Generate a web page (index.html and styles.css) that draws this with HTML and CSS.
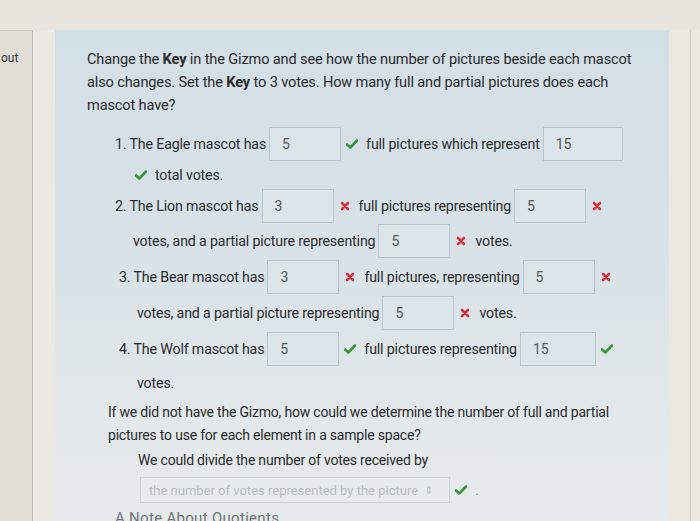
FILE: index.html
```html
<!DOCTYPE html>
<html lang="en">
<head>
    <meta charset="UTF-8">
    <title>Gizmo Questions</title>
    <link rel="stylesheet" href="styles.css">
</head>
<body>
    <div class="top-strip"></div>
    <div class="layout">
        <div class="sidebar">
            <div class="sidebar-link">out</div>
        </div>
        <div class="gutter"></div>

        <div class="panel">
            <p class="question">
                Change the <b>Key</b> in the Gizmo and see how the number of pictures beside each mascot
                also changes. Set the <b>Key</b> to 3 votes. How many full and partial pictures does each
                mascot have?
            </p>

            <div class="answers">
                <!-- Eagle -->
                <div class="line row-a">
                    <span class="label">1. The Eagle mascot has</span>
                    <input class="box" type="text" value="5" readonly>
                    <span class="mark ok"><svg viewBox="0 0 12 10"><path d="M1 5.5 L4.3 8.5 L11 1.5" /></svg></span>
                    <span class="label">full pictures which represent</span>
                    <input class="box wide" type="text" value="15" readonly>
                </div>
                <div class="line row-b indent">
                    <span class="mark ok"><svg viewBox="0 0 12 10"><path d="M1 5.5 L4.3 8.5 L11 1.5" /></svg></span>
                    <span class="label">total votes.</span>
                </div>

                <!-- Lion -->
                <div class="line row-c">
                    <span class="label">2. The Lion mascot has</span>
                    <input class="box" type="text" value="3" readonly>
                    <span class="mark bad"><svg viewBox="0 0 10 10"><path d="M2 2 L8 8 M8 2 L2 8" /></svg></span>
                    <span class="label">full pictures representing</span>
                    <input class="box" type="text" value="5" readonly>
                    <span class="mark bad"><svg viewBox="0 0 10 10"><path d="M2 2 L8 8 M8 2 L2 8" /></svg></span>
                </div>
                <div class="line row-d indent">
                    <span class="label">votes, and a partial picture representing</span>
                    <input class="box" type="text" value="5" readonly>
                    <span class="mark bad"><svg viewBox="0 0 10 10"><path d="M2 2 L8 8 M8 2 L2 8" /></svg></span>
                    <span class="label">votes.</span>
                </div>

                <!-- Bear -->
                <div class="line row-d shift">
                    <span class="label">3. The Bear mascot has</span>
                    <input class="box" type="text" value="3" readonly>
                    <span class="mark bad"><svg viewBox="0 0 10 10"><path d="M2 2 L8 8 M8 2 L2 8" /></svg></span>
                    <span class="label">full pictures, representing</span>
                    <input class="box" type="text" value="5" readonly>
                    <span class="mark bad"><svg viewBox="0 0 10 10"><path d="M2 2 L8 8 M8 2 L2 8" /></svg></span>
                </div>
                <div class="line row-d indent shift">
                    <span class="label">votes, and a partial picture representing</span>
                    <input class="box" type="text" value="5" readonly>
                    <span class="mark bad"><svg viewBox="0 0 10 10"><path d="M2 2 L8 8 M8 2 L2 8" /></svg></span>
                    <span class="label">votes.</span>
                </div>

                <!-- Wolf -->
                <div class="line row-d shift">
                    <span class="label">4. The Wolf mascot has</span>
                    <input class="box" type="text" value="5" readonly>
                    <span class="mark ok"><svg viewBox="0 0 12 10"><path d="M1 5.5 L4.3 8.5 L11 1.5" /></svg></span>
                    <span class="label">full pictures representing</span>
                    <input class="box mid" type="text" value="15" readonly>
                    <span class="mark ok"><svg viewBox="0 0 12 10"><path d="M1 5.5 L4.3 8.5 L11 1.5" /></svg></span>
                </div>
                <div class="line row-e indent shift">
                    <span class="label">votes.</span>
                </div>
            </div>

            <p class="question second">
                If we did not have the Gizmo, how could we determine the number of full and partial
                pictures to use for each element in a sample space?
            </p>
            <div class="answer-text">We could divide the number of votes received by</div>
            <div class="select-row">
                <div class="select">
                    <span>the number of votes represented by the picture</span>
                    <span class="arrows">&#8661;</span>
                </div>
                <span class="mark ok"><svg viewBox="0 0 12 10"><path d="M1 5.5 L4.3 8.5 L11 1.5" /></svg></span>
                <span class="dot">.</span>
            </div>
            <div class="note">A Note About Quotients</div>
        </div>

        <div class="right-strip">
            <div class="edge"></div>
        </div>
    </div>
</body>
</html>
```

FILE: styles.css
```css
body {
    margin: 0;
    width: 700px;
    height: 521px;
    overflow: hidden;
    background: #e4e0da;
    font-family: Roboto, "Liberation Sans", sans-serif;
    color: #2b2b2b;
}

.top-strip {
    height: 30px;
    background: #e8e5df;
}

.layout {
    display: flex;
    height: 491px;
}

.sidebar {
    width: 32px;
    background: #e1ddd7;
    border-top: 1px solid #c9c6c1;
    border-right: 1px solid #bdbab5;
}

.sidebar-link {
    font-size: 12px;
    color: #333;
    padding: 20px 0 0 1px;
}

.gutter {
    width: 22px;
    background: #ebe9e4;
}

.panel {
    width: 582px;
    padding: 18px 0 0 32px;
    background: linear-gradient(180deg, #d3dfe6 0%, #d8e2e8 45%, #e3e8ea 80%, #e7eaea 100%);
}

.right-strip {
    flex: 1;
    background: #ebe8e2;
    display: flex;
    justify-content: flex-end;
    padding-right: 9px;
}

.edge {
    width: 1px;
    background: #d3cfc8;
}

.question {
    margin: 0;
    font-size: 14.6px;
    line-height: 23px;
    letter-spacing: -0.15px;
    width: 560px;
}

.question b {
    font-weight: bold;
}

.answers {
    margin: 10px 0 0 28px;
}

.line {
    display: flex;
    align-items: center;
    font-size: 14.2px;
    letter-spacing: -0.15px;
}

.row-a { height: 34px; }
.row-b { height: 28px; }
.row-c { height: 34px; }
.row-d { height: 36px; }
.row-e { height: 32px; }

.indent {
    padding-left: 18px;
}

.shift {
    margin-left: 4px;
}

.label {
    white-space: nowrap;
}

.box {
    width: 72px;
    height: 34px;
    box-sizing: border-box;
    margin: 0 3px;
    padding: 0 0 0 12px;
    border: 1px solid #b9c5cc;
    background: #dbe5ea;
    font-family: Roboto, "Liberation Sans", sans-serif;
    font-size: 14px;
    color: #555;
    outline: none;
}

.box.wide {
    width: 80px;
}

.box.mid {
    width: 76px;
}

.mark {
    display: inline-flex;
    align-items: center;
    justify-content: center;
    width: 14px;
    margin: 0 7px 0 1px;
}

.mark svg {
    width: 12px;
    height: 10px;
    fill: none;
    stroke-width: 2.6;
    stroke-linecap: round;
    stroke-linejoin: round;
}

.mark.ok svg {
    stroke: #3f9142;
}

.mark.bad svg {
    width: 10px;
    stroke: #d2323c;
}

.question.second {
    margin: 2px 0 0 21px;
    font-size: 14px;
    letter-spacing: -0.2px;
    width: 505px;
}

.answer-text {
    margin: 2px 0 0 51px;
    font-size: 14px;
    line-height: 23px;
    letter-spacing: -0.2px;
}

.select-row {
    display: flex;
    align-items: center;
    margin: 5px 0 0 53px;
}

.select {
    width: 310px;
    height: 26px;
    box-sizing: border-box;
    border: 1px solid #ccd3d6;
    background: #e8ebec;
    display: flex;
    align-items: center;
    padding: 0 8px;
    gap: 6px;
    font-size: 13px;
    color: #b6bdc1;
}

.arrows {
    font-size: 11px;
}

.select-row .mark {
    margin-left: 4px;
}

.dot {
    color: #999;
    font-size: 14px;
}

.note {
    margin: 6px 0 0 28px;
    font-size: 15px;
    color: #6c7479;
    letter-spacing: 0.3px;
}
```
